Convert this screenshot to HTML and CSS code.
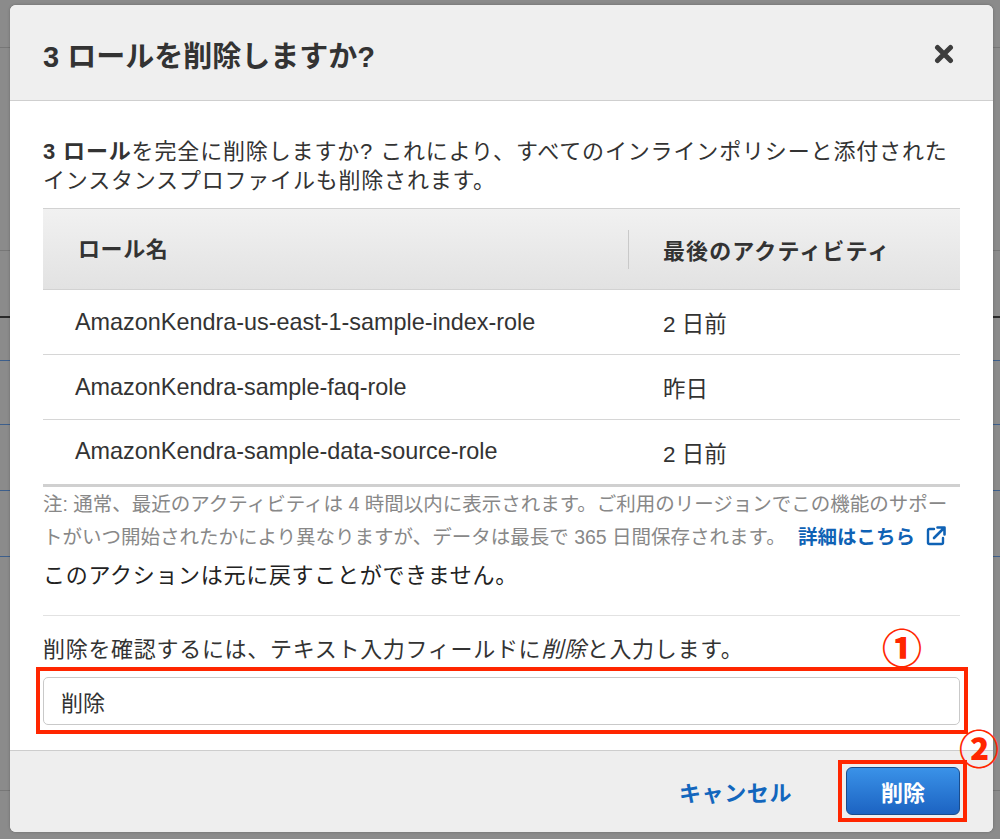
FILE: index.html
```html
<!DOCTYPE html>
<html lang="ja">
<head>
<meta charset="utf-8">
<title>3 ロールを削除しますか?</title>
<link rel="stylesheet" href="styles.css">
</head>
<body>
<div class="backdrop">
  <div class="modal">
    <div class="modal-header">
      <h2 class="modal-title">3 ロールを削除しますか?</h2>
      <button class="close" aria-label="閉じる">
        <svg width="20" height="20" viewBox="0 0 20 20"><path d="M3.5 3.5 L16.5 16.5 M16.5 3.5 L3.5 16.5" stroke="#3d3d3d" stroke-width="5" stroke-linecap="round" fill="none"/></svg>
      </button>
    </div>
    <div class="modal-body">
      <p class="lead"><span class="line wide"><b>3 ロール</b>を完全に削除しますか? これにより、すべてのインラインポリシーと添付された</span><span class="line">インスタンスプロファイルも削除されます。</span></p>
      <div class="table">
        <div class="thead">
          <div class="th col1">ロール名</div>
          <div class="th col2">最後のアクティビティ</div>
        </div>
        <div class="tr">
          <div class="td col1">AmazonKendra-us-east-1-sample-index-role</div>
          <div class="td col2">2 日前</div>
        </div>
        <div class="tr">
          <div class="td col1">AmazonKendra-sample-faq-role</div>
          <div class="td col2">昨日</div>
        </div>
        <div class="tr last">
          <div class="td col1">AmazonKendra-sample-data-source-role</div>
          <div class="td col2">2 日前</div>
        </div>
      </div>
      <div class="note">
        <span class="line">注: 通常、最近のアクティビティは 4 時間以内に表示されます。ご利用のリージョンでこの機能のサポー</span>
        <span class="line">トがいつ開始されたかにより異なりますが、データは最長で 365 日間保存されます。 <a class="link" href="#">詳細はこちら <svg class="ext" width="22" height="22" viewBox="0 0 22 22"><path d="M9 4 H4.5 Q3 4 3 5.5 V17.5 Q3 19 4.5 19 H16.5 Q18 19 18 17.5 V13" stroke="#0f62b5" stroke-width="2.4" fill="none" stroke-linecap="round"/><path d="M9 13 L19 3 M12.5 2.5 H19.5 V9.5" stroke="#0f62b5" stroke-width="2.6" fill="none" stroke-linecap="round" stroke-linejoin="round"/></svg></a></span>
      </div>
      <p class="warn">このアクションは元に戻すことができません。</p>
      <hr class="divider">
      <div class="confirm-row">
        <span class="confirm-label">削除を確認するには、テキスト入力フィールドに<i>削除</i>と入力します。</span>
        <span class="mark">①</span>
      </div>
      <div class="input-wrap">
        <input class="text-input" type="text" value="削除">
      </div>
    </div>
    <div class="modal-footer">
      <a class="cancel" href="#">キャンセル</a>
      <div class="btn-wrap">
        <button class="btn-primary">削除</button>
        <span class="mark mark2">②</span>
      </div>
    </div>
  </div>
</div>
</body>
</html>
```
FILE: styles.css
```css
* { box-sizing: border-box; }
html, body { margin: 0; padding: 0; }
body {
  font-family: "Liberation Sans", "Noto Sans CJK JP", sans-serif;
  color: #333;
  background-color: #8b8b8b;
  background-image:
    linear-gradient(#777, #777),
    linear-gradient(#777, #777),
    linear-gradient(#2a2a2a, #2a2a2a),
    linear-gradient(#3d5f8c, #3d5f8c),
    linear-gradient(#3d5f8c, #3d5f8c),
    linear-gradient(#3d5f8c, #3d5f8c),
    linear-gradient(#3d5f8c, #3d5f8c),
    linear-gradient(#777, #777);
  background-size: 100% 1px, 100% 1px, 100% 2px, 100% 1px, 100% 1px, 100% 1px, 100% 1px, 100% 1px;
  background-position: 0 47px, 0 250px, 0 316px, 0 360px, 0 424px, 0 490px, 0 556px, 0 790px;
  background-repeat: no-repeat;
}
.backdrop {
  min-height: 839px;
  padding: 5px 0 0 10px;
}
.modal {
  width: 983px;
  background: #fff;
  border-radius: 6px;
  box-shadow: 0 0 3px rgba(0,0,0,0.25);
}
.modal-header {
  height: 96px;
  background: #efefef;
  border-bottom: 1px solid #cfcfcf;
  border-radius: 6px 6px 0 0;
  display: flex;
  align-items: center;
  justify-content: space-between;
  padding: 2px 39px 0 33px;
}
.modal-title {
  margin: 0;
  font-size: 29px;
  font-weight: bold;
  color: #333;
}
.close {
  border: 0;
  background: none;
  padding: 0;
  width: 20px;
  height: 20px;
  display: block;
  cursor: pointer;
}
.close svg { display: block; }
.modal-body {
  padding: 36px 33px 25px 33px;
}
.line {
  display: block;
  white-space: nowrap;
}
.lead {
  margin: 0;
  font-size: 22px;
  line-height: 29px;
  color: #333;
  letter-spacing: 0.8px;
}
.lead .line.wide { letter-spacing: 0.85px; }
.lead b { font-weight: bold; }
.table {
  margin-top: 13px;
}
.thead {
  display: flex;
  height: 82px;
  border-top: 1px solid #d2d2d2;
  border-bottom: 1px solid #d2d2d2;
  background: linear-gradient(#f1f1f1, #e2e2e2);
  align-items: center;
}
.th {
  font-size: 22px;
  font-weight: bold;
  color: #333;
  letter-spacing: 0.6px;
}
.thead .col1 {
  width: 586px;
  padding-left: 35px;
  height: 39px;
  line-height: 39px;
  border-right: 1px solid #c9c9c9;
}
.thead .col2 { padding-left: 34px; letter-spacing: 1.1px; }
.tr {
  display: flex;
  align-items: center;
  height: 65px;
  border-bottom: 1px solid #d6d6d6;
}
.tr.last {
  height: 67px;
  border-bottom: 3px solid #d0d0d0;
}
.td {
  font-size: 23.4px;
  color: #333;
}
.tr .col1 { width: 587px; padding-left: 32px; }
.tr .col2 { padding-left: 33px; font-size: 22.5px; }
.tr.last .td { margin-top: -1px; }
.note {
  margin: 1px 0 0 0;
  font-size: 19.5px;
  line-height: 33px;
  color: #888;
}
.link {
  color: #0f62b5;
  font-weight: bold;
  text-decoration: none;
  margin-left: 7px;
}
.ext {
  vertical-align: -3px;
  margin-left: 5px;
}
.warn {
  margin: 7px 0 0 0;
  font-size: 22px;
  line-height: 30px;
  color: #222;
  letter-spacing: 0.7px;
}
.divider {
  margin: 24px 0 0 0;
  border: 0;
  border-top: 1px solid #e2e2e2;
  height: 0;
}
.confirm-row {
  margin-top: 19px;
  display: flex;
  justify-content: space-between;
  align-items: center;
  height: 30px;
}
.confirm-label {
  font-size: 22px;
  line-height: 30px;
  color: #333;
  letter-spacing: 0.7px;
}
.mark {
  font-family: "Noto Sans CJK JP", sans-serif;
  font-weight: 900;
  color: #ff2600;
  font-size: 40px;
  line-height: 40px;
}
.confirm-row .mark {
  margin-right: 38px;
  margin-top: -8px;
}
.input-wrap {
  position: relative;
  margin-top: 12px;
}
.input-wrap::after {
  content: "";
  position: absolute;
  left: -7px;
  right: -8px;
  top: -10px;
  bottom: -9px;
  border: 4px solid #ff2600;
  pointer-events: none;
}
.text-input {
  display: block;
  width: 100%;
  height: 48px;
  border: 1px solid #c9c9c9;
  border-radius: 5px;
  padding: 0 17px;
  font-family: "Liberation Sans", "Noto Sans CJK JP", sans-serif;
  font-size: 22px;
  color: #333;
  background: #fff;
  outline: none;
}
.modal-footer {
  height: 82px;
  background: #eeeeee;
  border-top: 1px solid #cdcdcd;
  border-radius: 0 0 6px 6px;
  display: flex;
  align-items: center;
  justify-content: flex-end;
  padding: 0 33px 1px 0;
  gap: 54px;
}
.cancel {
  font-size: 22px;
  font-weight: bold;
  color: #1266bd;
  text-decoration: none;
  letter-spacing: 0.6px;
}
.btn-wrap {
  position: relative;
}
.btn-wrap::after {
  content: "";
  position: absolute;
  left: -8px;
  right: -7px;
  top: -7px;
  bottom: -7px;
  border: 4px solid #ff2600;
  pointer-events: none;
}
.btn-primary {
  display: block;
  width: 114px;
  height: 48px;
  border: 1px solid #1a4c8c;
  border-radius: 6px;
  background: linear-gradient(#3a92e8, #1c63c2);
  color: #fff;
  font-family: "Liberation Sans", "Noto Sans CJK JP", sans-serif;
  font-size: 22px;
  font-weight: bold;
  cursor: pointer;
}
.mark2 {
  position: absolute;
  left: 113px;
  top: -40px;
}
```
